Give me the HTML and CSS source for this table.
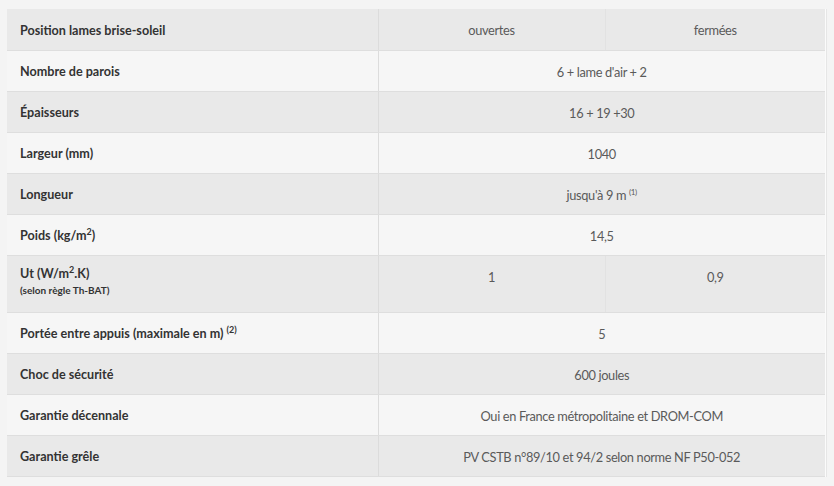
FILE: index.html
```html
<!DOCTYPE html>
<html lang="fr">
<head>
<meta charset="utf-8">
<link rel="stylesheet" href="styles.css">
</head>
<body>
<div class="wrap">
<table class="spec">
  <colgroup><col class="c-label"><col class="c-a"><col class="c-b"></colgroup>
  <tr class="dark"><th>Position lames brise-soleil</th><td>ouvertes</td><td>fermées</td></tr>
  <tr class="light"><th>Nombre de parois</th><td colspan="2">6 + lame d'air + 2</td></tr>
  <tr class="dark"><th>Épaisseurs</th><td colspan="2">16 + 19 +30</td></tr>
  <tr class="light"><th>Largeur (mm)</th><td colspan="2">1040</td></tr>
  <tr class="dark"><th>Longueur</th><td colspan="2">jusqu'à 9 m <sup>(1)</sup></td></tr>
  <tr class="light"><th>Poids (kg/m<sup class="s2">2</sup>)</th><td colspan="2">14,5</td></tr>
  <tr class="dark tall"><th class="top"><span class="l1">Ut (W/m<sup>2</sup>.K)</span><span class="note">(selon règle Th-BAT)</span></th><td class="top">1</td><td class="top">0,9</td></tr>
  <tr class="light"><th>Portée entre appuis (maximale en m) <sup>(2)</sup></th><td colspan="2">5</td></tr>
  <tr class="dark"><th>Choc de sécurité</th><td colspan="2">600 joules</td></tr>
  <tr class="light"><th>Garantie décennale</th><td colspan="2">Oui en France métropolitaine et DROM-COM</td></tr>
  <tr class="dark"><th>Garantie grêle</th><td colspan="2">PV CSTB n°89/10 et 94/2 selon norme NF P50-052</td></tr>
</table>
</div>
</body>
</html>
```
FILE: styles.css
```css
html, body { margin: 0; padding: 0; }
body { background: #f4f4f4; width: 834px; height: 486px; overflow: hidden; }
.wrap { padding: 9px 0 0 7px; }
.spec {
  border-collapse: collapse;
  width: 818px;
  table-layout: fixed;
  font-family: Lato, "Noto Sans", sans-serif;
  box-shadow: 1px 0 0 #fbfbfb, 2px 0 0 #e6e6e6;
}
.c-label { width: 371px; }
.c-a { width: 227px; }
.c-b { width: 220px; }
.spec th, .spec td {
  border-bottom: 1px solid #dedede;
  height: 41px;
  padding: 2px 13px 0;
  box-sizing: border-box;
  vertical-align: middle;
}
.spec th {
  text-align: left;
  font-weight: 700;
  font-size: 12.6px;
  color: #333;
  border-right: 1px solid #dcdcdc;
}
.spec td {
  text-align: center;
  font-weight: 400;
  font-size: 12.8px;
  letter-spacing: -0.35px;
  color: #5a5a5a;
  border-left: 1px solid #e2e2e2;
}
.dark th, .dark td { background: #e9e9e9; }
.light th, .light td { background: #f6f6f6; }
.tall th, .tall td { height: 57px; }
.spec td.top { vertical-align: top; padding-top: 12px; line-height: 18px; }
.spec th.top { vertical-align: top; padding-top: 10px; }
.l1 { display: block; line-height: 16px; }
.spec sup { font-size: 8px; vertical-align: 5px; line-height: 0; }
.spec th sup { font-size: 9px; }
.note { display: block; font-size: 10px; font-weight: 700; line-height: 14px; margin-top: 1px; }
```
